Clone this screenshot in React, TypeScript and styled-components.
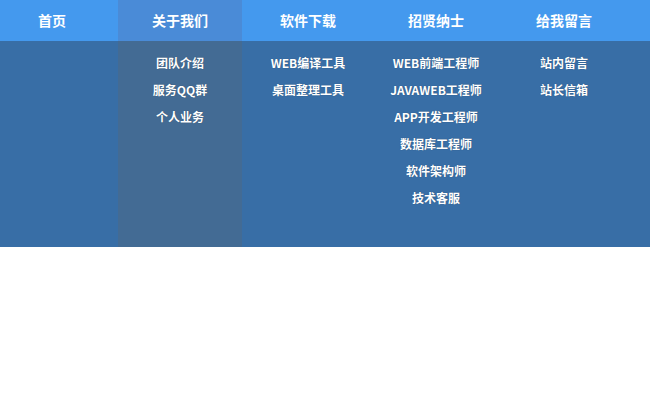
import styled, { createGlobalStyle } from "styled-components";

const GlobalStyle = createGlobalStyle`
  body {
    margin: 0;
    background: #ffffff;
    font-family: "Microsoft YaHei", "Noto Sans CJK SC", "Noto Sans", sans-serif;
  }
`;

type Item = { title: string; links: string[] };

const items: Item[] = [
  { title: "首页", links: [] },
  { title: "关于我们", links: ["团队介绍", "服务QQ群", "个人业务"] },
  { title: "软件下载", links: ["WEB编译工具", "桌面整理工具"] },
  {
    title: "招贤纳士",
    links: [
      "WEB前端工程师",
      "JAVAWEB工程师",
      "APP开发工程师",
      "数据库工程师",
      "软件架构师",
      "技术客服",
    ],
  },
  { title: "给我留言", links: ["站内留言", "站长信箱"] },
];

const App = (): JSX.Element => {
  return (
    <>
      <GlobalStyle />
      <Nav>
        <Menu>
          {items.map((item, i) => (
            <Column key={item.title} active={i === 1 ? 1 : 0}>
              <Head active={i === 1 ? 1 : 0}>{item.title}</Head>
              <Sub>
                {item.links.map((link) => (
                  <li key={link}>
                    <a href="#">{link}</a>
                  </li>
                ))}
              </Sub>
            </Column>
          ))}
        </Menu>
      </Nav>
    </>
  );
};

export default App;

const Nav = styled.nav`
  width: 100%;
  height: 247px;
  overflow: hidden;
  background: linear-gradient(to bottom, #4499ee 41px, #386ea6 41px);
`;

const Menu = styled.ul`
  display: flex;
  gap: 4px;
  margin: 0 0 0 -10px;
  padding: 0;
  list-style: none;
  height: 100%;
`;

const Column = styled.li<{ active: number }>`
  width: 124px;
  flex-shrink: 0;
  height: 100%;
  background: ${(p) => (p.active ? "#436b94" : "transparent")};
`;

const Head = styled.a<{ active: number }>`
  display: block;
  height: 41px;
  line-height: 40px;
  text-align: center;
  color: #ffffff;
  font-size: 14px;
  font-weight: bold;
  background: ${(p) => (p.active ? "#4a8bd7" : "transparent")};
  cursor: pointer;
`;

const Sub = styled.ul`
  margin: 0;
  padding: 7px 0 0;
  list-style: none;

  li {
    height: 27px;
    line-height: 27px;
    text-align: center;
  }

  a {
    color: #ffffff;
    font-size: 12px;
    font-weight: bold;
    text-decoration: none;
    text-shadow: 0 0 1px rgba(0, 0, 0, 0.35);
    white-space: nowrap;
  }
`;
